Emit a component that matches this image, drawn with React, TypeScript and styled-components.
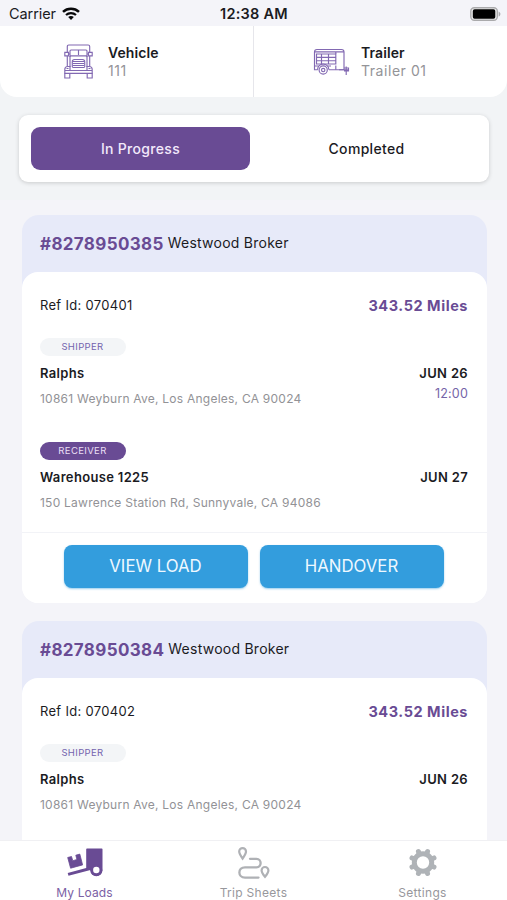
import React from 'react';
import styled, { createGlobalStyle, css } from 'styled-components';

const purple = '#694b94';

const GlobalStyle = createGlobalStyle`
  * { box-sizing: border-box; }
  body { margin: 0; font-family: Inter, "Liberation Sans", sans-serif; color: #1b1b1f; }
  button { font: inherit; border: 0; padding: 0; cursor: pointer; }
`;

const Screen = styled.div`
  width: 507px;
  height: 900px;
  display: flex;
  flex-direction: column;
  background: #f4f4f9;
  overflow: hidden;
`;

const StatusBar = styled.header`
  height: 26px;
  flex: none;
  display: grid;
  grid-template-columns: 1fr auto 1fr;
  align-items: center;
  padding: 1px 6px 0 9px;
`;

const Carrier = styled.div`
  display: flex;
  align-items: center;
  gap: 6px;
  font-size: 14.5px;
  line-height: 18px;
  letter-spacing: -0.08px;
`;

const Clock = styled.div`
  font-size: 14.5px;
  line-height: 18px;
  font-weight: 600;
  letter-spacing: 0.25px;
  margin-left: -2px;
`;

const BatteryIcon = styled.svg`
  justify-self: end;
`;

const TopArea = styled.div`
  flex: none;
  height: 174px;
  background: linear-gradient(#f4f4f9 0 30px, #f2f4f6 30px);
`;

const Assignment = styled.section`
  height: 71px;
  display: grid;
  grid-template-columns: 254px 1fr;
  background: #fff;
  border-radius: 0 0 17px 17px;
`;

const AssignmentItem = styled.div<{ $trailer?: boolean }>`
  display: flex;
  align-items: center;
  gap: ${p => (p.$trailer ? 11 : 13)}px;
  padding-left: ${p => (p.$trailer ? 59 : 62)}px;
  border-right: ${p => (p.$trailer ? 0 : 1)}px solid #e6e6eb;
`;

const AssignmentText = styled.div`
  font-size: 14px;
  line-height: 18px;
`;

const AssignmentName = styled.div`
  font-weight: 600;
  letter-spacing: 0.1px;
`;

const AssignmentValue = styled.div`
  color: #949498;
  letter-spacing: 0.55px;
`;

const Tabs = styled.div`
  margin: 18px 18px 0 19px;
  height: 67px;
  padding: 12px;
  display: grid;
  grid-template-columns: 219px 1fr;
  gap: 7px;
  background: #fff;
  border-radius: 9px;
  box-shadow: 0 1px 4px rgba(0, 0, 0, 0.17);
`;

const Tab = styled.button<{ $active?: boolean }>`
  height: 43px;
  border-radius: 9px;
  font-size: 14px;
  font-weight: 500;
  letter-spacing: 0.32px;
  padding-right: ${p => (p.$active ? 0 : 1)}px;
  color: ${p => (p.$active ? '#f3e9fb' : '#1b1b1f')};
  background: ${p => (p.$active ? purple : 'transparent')};
`;

const Loads = styled.main`
  flex: 1;
  min-height: 0;
  overflow: hidden;
  padding: 15px 20px 0 22px;
  display: flex;
  flex-direction: column;
  gap: 18px;
`;

const Card = styled.article`
  flex: none;
  background: linear-gradient(#e7eaf9 0 90px, #fff 90px);
  border-radius: 17px;
`;

const CardHead = styled.div`
  height: 57px;
  padding: 0 18px 2px;
  display: flex;
  align-items: center;
  gap: 4px;
`;

const LoadNumber = styled.span`
  font-size: 17px;
  font-weight: 700;
  letter-spacing: 0.35px;
  color: ${purple};
  padding-top: 2px;
`;

const Broker = styled.span`
  font-size: 14px;
  letter-spacing: 0.25px;
  padding-bottom: 1px;
`;

const CardBody = styled.div`
  background: #fff;
  border-radius: 16px;
  min-height: 180px;
`;

const Summary = styled.div`
  height: 66px;
  padding: 0 19px 0 18px;
  display: flex;
  align-items: center;
  justify-content: space-between;
`;

const RefId = styled.span`
  font-size: 13px;
  letter-spacing: 0.3px;
`;

const Miles = styled.span`
  font-size: 14.5px;
  font-weight: 700;
  letter-spacing: 0.55px;
  color: ${purple};
`;

const Stops = styled.div`
  padding: 0 19px 14px 18px;
  display: flex;
  flex-direction: column;
  gap: 28px;
`;

const StopBlock = styled.div`
  height: 76px;
`;

const Pill = styled.div<{ $filled?: boolean }>`
  width: 86px;
  height: 18px;
  border-radius: 9px;
  padding-right: 1px;
  text-align: center;
  font-size: 9.5px;
  line-height: 18px;
  letter-spacing: 0.36px;
  ${p =>
    p.$filled
      ? css`background: ${purple}; color: #eadff5;`
      : css`background: #f3f5f7; color: #7463ae;`}
`;

const StopRow = styled.div`
  display: flex;
  justify-content: space-between;
  padding-top: 8px;
`;

const StopWhen = styled.div`
  text-align: right;
`;

const Strong = styled.div`
  font-size: 13px;
  line-height: 18px;
  font-weight: 600;
  letter-spacing: 0.33px;
`;

const Address = styled.div`
  font-size: 12px;
  line-height: 34px;
  letter-spacing: 0.24px;
  color: #929296;
`;

const Time = styled.div`
  font-size: 12.5px;
  line-height: 23px;
  letter-spacing: 0.2px;
  color: #7564a8;
`;

const Actions = styled.div`
  height: 71px;
  border-top: 1px solid #f2f3f7;
  padding-top: 12px;
  display: flex;
  justify-content: center;
  gap: 12px;
  padding-right: 2px;
`;

const ActionButton = styled.button`
  width: 184px;
  height: 43px;
  border-radius: 8px;
  padding-bottom: 2px;
  background: #339ddd;
  color: #eef8ff;
  font-size: 16.8px;
  letter-spacing: 0;
  box-shadow: 0 1px 2px rgba(51, 157, 221, 0.5);
`;

const BottomNav = styled.nav`
  flex: none;
  height: 60px;
  background: #fff;
  border-top: 1px solid #f0f0f3;
  display: grid;
  grid-template-columns: repeat(3, 1fr);
`;

const NavItem = styled.button<{ $active?: boolean }>`
  background: none;
  display: flex;
  flex-direction: column;
  align-items: center;
  justify-content: flex-start;
  padding-top: 4px;
  gap: 6px;
  font-size: 12px;
  line-height: 15px;
  letter-spacing: ${p => (p.$active ? 0.12 : 0.3)}px;
  color: ${p => (p.$active ? '#7b61a5' : '#97979c')};
`;

const WifiIcon = () => (
  <svg width="18" height="13" viewBox="0 0 18 13" fill="none" stroke="#08080a">
    <path d="M1 4.8C5.5.6 12.5.6 17 4.8" strokeWidth="2.5" />
    <path d="M4 8c2.8-2.6 7.2-2.6 10 0" strokeWidth="2.2" />
    <path d="M6.2 10.1c1.6-1.4 4-1.4 5.6 0L9 13Z" fill="#08080a" stroke="none" />
  </svg>
);

const Battery = () => (
  <BatteryIcon width="31" height="14" viewBox="0 0 31 14">
    <rect x=".8" y=".7" width="26.5" height="12.6" rx="3.5" fill="#eee" stroke="#aaaaac" strokeWidth="1.4" />
    <rect x="2.8" y="2.3" width="22.5" height="9.4" rx="1.8" fill="#000" />
    <path d="M28.6 4.4c2.4 1.2 2.4 4 0 5.2Z" fill="#aaaaac" />
  </BatteryIcon>
);

const TruckIcon = () => (
  <svg width="33" height="36" viewBox="0 0 33 36" fill="none" stroke="#8269b2" strokeWidth="1.15">
    <path d="M5.3 8V2.5Q5.3 1 6.8 1h19.4q1.5 0 1.5 1.5V8" />
    <path d="M8 13V7q0-1 1-1h15q1 0 1 1v6M16.5 6v5M8 11.8h17" />
    <path d="M2.8 8.3h3.7v3.5H2.8zM26.5 8.3h3.7v3.5h-3.7zM6.5 10H8M25 10h1.5" />
    <path d="M5.3 12v10M27.7 12v10M8 12v11M25 12v11" />
    <path d="M10.3 23v-5.2q0-2.3 2.2-2.3h8q2.2 0 2.2 2.3V23M11 17.5h11M11 19.5h11M11 21.5h11M10.3 23.5h12.4" />
    <path d="M2.8 29.3v-3.8q0-3 3-3H8v4h17v-4h2.2q3 0 3 3v3.8ZM2.8 26.5h5.2M25 26.5h5.2M8 29.3h17" />
    <path d="M2.8 29.3V34h5v-4.5M30.2 29.3V34h-5v-4.5M4.5 24.5h2M26.5 24.5h2" />
  </svg>
);

const TrailerIcon = () => (
  <svg width="37" height="28" viewBox="0 0 37 28" fill="none" stroke="#8269b2" strokeWidth="1.15">
    <path d="M4.7 21.7H1.5V4Q1.5 1.5 4 1.5h24.5Q31 1.5 31 4v17.7H16" />
    <path d="M1.5 3.8H31M3.5 6h19.3v10H3.5zM3.5 9.3h19.3M3.5 12.7h19.3M8.5 6v10M15.5 6v10" />
    <path d="M22.8 21.7V17.5M22.8 6v-2M26 21.7h9M31 20h4.5v2.8H31M33.2 18.5V27M1.5 18h4M15 18h3" />
    <path d="M4.5 21.7a5.7 5.7 0 0 1 11.4 0" />
    <circle cx="10.2" cy="22" r="4.1" />
    <circle cx="10.2" cy="22" r="1.7" />
  </svg>
);

const LoadsIcon = () => (
  <svg width="36" height="34" viewBox="0 0 36 34">
    <path d="M20 3.5h14.7q.8 0 .8.8V25a6 6 0 0 1-12 0l-22 5.7-.8-2.8L19.2 23V4.3q0-.8.8-.8Z" fill={purple} />
    <circle cx="29.3" cy="25.2" r="6" fill={purple} />
    <circle cx="29.3" cy="25" r="3.2" fill="#fff" />
    <path d="m.7 12.5 3.8-1 1.3 4.2 4.1-1.2-1.1-4.3 4-1.1 2.8 10.8-12 3.3Z" fill={purple} stroke={purple} strokeWidth=".8" strokeLinejoin="round" />
  </svg>
);

const RouteIcon = () => (
  <svg width="34" height="34" viewBox="0 0 34 34" fill="none" stroke="#afb1b5" strokeWidth="2.2">
    <path d="M5.6 13.5C3.1 10 2.2 8.2 2.2 6.5a3.4 3.4 0 0 1 6.8 0c0 1.7-.9 3.5-3.4 7Z" />
    <path d="M28 31.8c-2.5-3.2-3.4-4.9-3.4-6.4a3.4 3.4 0 0 1 6.8 0c0 1.5-.9 3.2-3.4 6.4Z" />
    <path d="M13 13.8h6.5c5.5 0 5.5 8.5 0 8.5H8c-7.5 0-7.5 10.3 0 10.3h13.5" strokeWidth="2.3" strokeLinecap="round" />
  </svg>
);

const GearIcon = () => (
  <svg width="34" height="34" viewBox="0 0 34 34" fill="none" stroke="#afb3b7">
    <circle cx="17" cy="17.5" r="8.7" strokeWidth="5" />
    <g strokeWidth="5" strokeLinecap="round">
      {[22.5, 67.5, 112.5, 157.5, 202.5, 247.5, 292.5, 337.5].map(angle => (
        <path key={angle} d="M17 8V5.6" transform={`rotate(${angle} 17 17.5)`} />
      ))}
    </g>
  </svg>
);

interface StopData { kind: string; name: string; address: string; date: string; time?: string }
interface LoadData { id: string; refId: string; stops: StopData[]; actions: string[] }

const shipper: StopData = { kind: 'SHIPPER', name: 'Ralphs', address: '10861 Weyburn Ave, Los Angeles, CA 90024', date: 'JUN 26' };
const receiver: StopData = { kind: 'RECEIVER', name: 'Warehouse 1225', address: '150 Lawrence Station Rd, Sunnyvale, CA 94086', date: 'JUN 27' };

const loads: LoadData[] = [
  { id: '8278950385', refId: '070401', stops: [{ ...shipper, time: '12:00' }, receiver], actions: ['VIEW LOAD', 'HANDOVER'] },
  { id: '8278950384', refId: '070402', stops: [shipper], actions: [] },
];

const Stop = ({ stop }: { stop: StopData }) => (
  <StopBlock>
    <Pill $filled={stop.kind === 'RECEIVER'}>{stop.kind}</Pill>
    <StopRow>
      <div>
        <Strong>{stop.name}</Strong>
        <Address>{stop.address}</Address>
      </div>
      <StopWhen>
        <Strong>{stop.date}</Strong>
        {stop.time && <Time>{stop.time}</Time>}
      </StopWhen>
    </StopRow>
  </StopBlock>
);

const LoadCard = ({ load }: { load: LoadData }) => (
  <Card>
    <CardHead>
      <LoadNumber>#{load.id}</LoadNumber>
      <Broker>Westwood Broker</Broker>
    </CardHead>
    <CardBody>
      <Summary>
        <RefId>Ref Id: {load.refId}</RefId>
        <Miles>343.52 Miles</Miles>
      </Summary>
      <Stops>
        {load.stops.map(stop => <Stop key={stop.kind} stop={stop} />)}
      </Stops>
      {load.actions.length > 0 && (
        <Actions>
          {load.actions.map(label => <ActionButton key={label}>{label}</ActionButton>)}
        </Actions>
      )}
    </CardBody>
  </Card>
);

export default function App() {
  return (
    <Screen>
      <GlobalStyle />
      <StatusBar>
        <Carrier>Carrier <WifiIcon /></Carrier>
        <Clock>12:38 AM</Clock>
        <Battery />
      </StatusBar>
      <TopArea>
        <Assignment>
          <AssignmentItem>
            <TruckIcon />
            <AssignmentText>
              <AssignmentName>Vehicle</AssignmentName>
              <AssignmentValue>111</AssignmentValue>
            </AssignmentText>
          </AssignmentItem>
          <AssignmentItem $trailer>
            <TrailerIcon />
            <AssignmentText>
              <AssignmentName>Trailer</AssignmentName>
              <AssignmentValue>Trailer 01</AssignmentValue>
            </AssignmentText>
          </AssignmentItem>
        </Assignment>
        <Tabs>
          <Tab $active>In Progress</Tab>
          <Tab>Completed</Tab>
        </Tabs>
      </TopArea>
      <Loads>
        {loads.map(load => <LoadCard key={load.id} load={load} />)}
      </Loads>
      <BottomNav>
        <NavItem $active><LoadsIcon />My Loads</NavItem>
        <NavItem><RouteIcon />Trip Sheets</NavItem>
        <NavItem><GearIcon />Settings</NavItem>
      </BottomNav>
    </Screen>
  );
}
